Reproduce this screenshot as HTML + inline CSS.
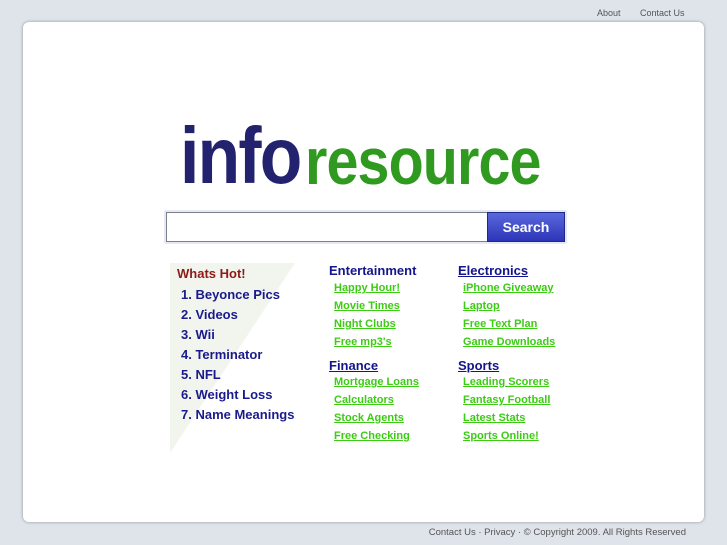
<!DOCTYPE html>
<html><head><style>
body{margin:0;width:727px;height:545px;background:#dfe3ea;font-family:"Liberation Sans",sans-serif;position:relative;overflow:hidden}
.a{position:absolute;white-space:nowrap}
#card{position:absolute;left:23px;top:22px;width:681px;height:500px;background:#fff;border-radius:6px;box-shadow:0 0 3px rgba(0,0,0,.35)}
.top{font-size:9px;color:#555;top:8px}
.logo{font-weight:bold;letter-spacing:-2px;line-height:1}
.hot{font-size:13px;font-weight:bold;color:#1a1a8c}
.h{font-size:13px;font-weight:bold;color:#14148c}
.l{font-size:11px;font-weight:bold;color:#3ccc14;text-decoration:underline}
</style></head><body>
<div class="a top" style="left:597px">About</div>
<div class="a top" style="left:640px">Contact Us</div>
<div id="card"></div>
<div class="a logo" style="left:180px;top:116px;font-size:80px;color:#22226e;transform:scaleX(.87);transform-origin:left">info</div>
<div class="a logo" style="left:305px;top:128px;font-size:66px;color:#2f9a1f;transform:scaleX(.87);transform-origin:left;letter-spacing:-1px">resource</div>
<div class="a" style="left:170px;top:186px;width:380px;height:20px;background:linear-gradient(#fff0,#fff 90%)"></div>
<div class="a" style="left:164px;top:210px;width:403px;height:34px;background:#e6e9f4;border-radius:2px"></div>
<div class="a" style="left:166px;top:212px;width:320px;height:28px;background:#fff;border:1px solid #7a7f8c"></div>
<div class="a" style="left:487px;top:212px;width:78px;height:30px;background:linear-gradient(#5a68dc,#2c35b8);border:1px solid #1f2790;box-sizing:border-box;color:#fff;font-weight:bold;font-size:14px;text-align:center;line-height:28px">Search</div>
<div class="a" style="left:170px;top:263px;width:0;height:0;border-top:190px solid #f1f5ee;border-right:125px solid transparent"></div>
<div class="a" style="left:177px;top:266px;font-size:13px;font-weight:bold;color:#8e1a1a">Whats Hot!</div>
<div class="a hot" style="left:181px;top:287px">1. Beyonce Pics</div>
<div class="a hot" style="left:181px;top:307px">2. Videos</div>
<div class="a hot" style="left:181px;top:327px">3. Wii</div>
<div class="a hot" style="left:181px;top:347px">4. Terminator</div>
<div class="a hot" style="left:181px;top:367px">5. NFL</div>
<div class="a hot" style="left:181px;top:387px">6. Weight Loss</div>
<div class="a hot" style="left:181px;top:407px">7. Name Meanings</div>
<div class="a h" style="left:329px;top:263px">Entertainment</div>
<div class="a l" style="left:334px;top:282px">Happy Hour!</div>
<div class="a l" style="left:334px;top:300px">Movie Times</div>
<div class="a l" style="left:334px;top:318px">Night Clubs</div>
<div class="a l" style="left:334px;top:336px">Free mp3's</div>
<div class="a h" style="left:329px;top:358px;text-decoration:underline">Finance</div>
<div class="a l" style="left:334px;top:376px">Mortgage Loans</div>
<div class="a l" style="left:334px;top:394px">Calculators</div>
<div class="a l" style="left:334px;top:412px">Stock Agents</div>
<div class="a l" style="left:334px;top:430px">Free Checking</div>
<div class="a h" style="left:458px;top:263px;text-decoration:underline">Electronics</div>
<div class="a l" style="left:463px;top:282px">iPhone Giveaway</div>
<div class="a l" style="left:463px;top:300px">Laptop</div>
<div class="a l" style="left:463px;top:318px">Free Text Plan</div>
<div class="a l" style="left:463px;top:336px">Game Downloads</div>
<div class="a h" style="left:458px;top:358px;text-decoration:underline">Sports</div>
<div class="a l" style="left:463px;top:376px">Leading Scorers</div>
<div class="a l" style="left:463px;top:394px">Fantasy Football</div>
<div class="a l" style="left:463px;top:412px">Latest Stats</div>
<div class="a l" style="left:463px;top:430px">Sports Online!</div>
<div class="a" style="right:41px;top:527px;font-size:9.5px;color:#555">Contact Us · Privacy · © Copyright 2009. All Rights Reserved</div>
</body></html>
